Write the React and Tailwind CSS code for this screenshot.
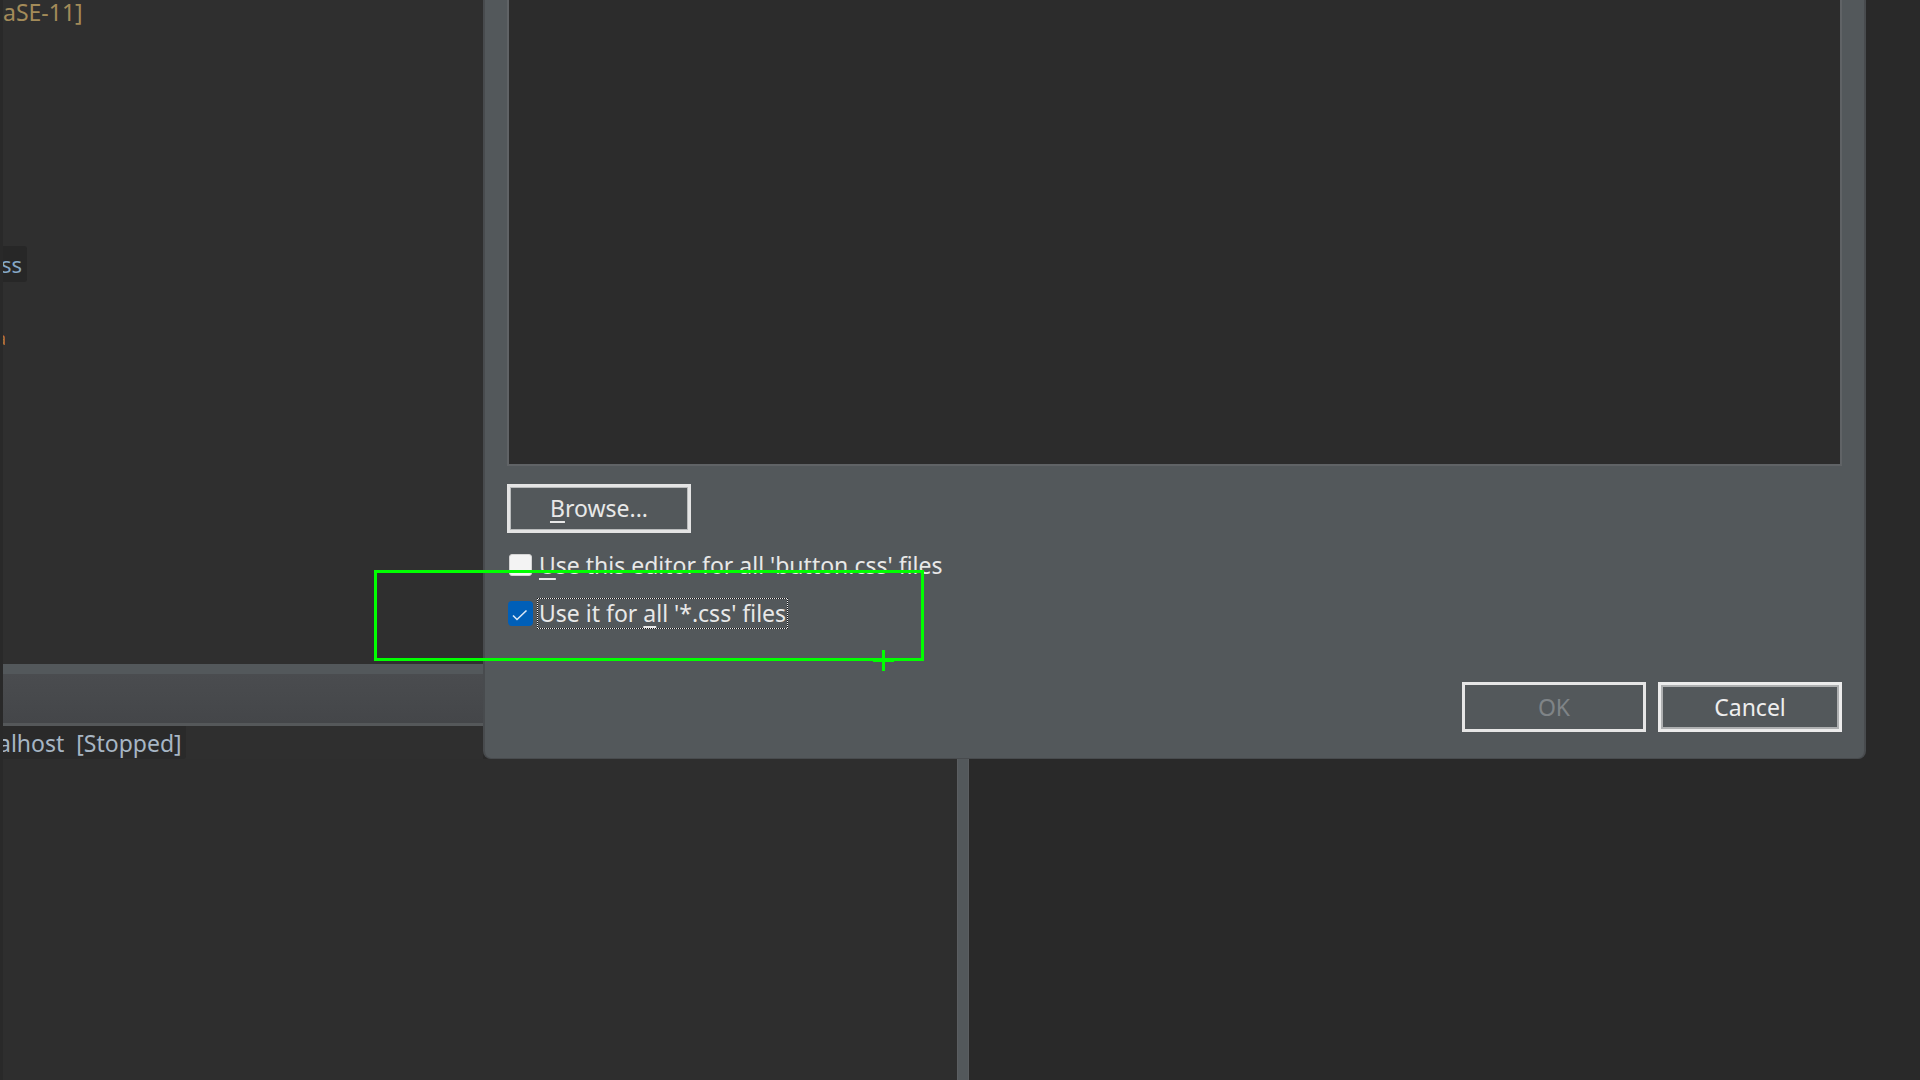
import React from 'react';

function EditorPane() {
  return (
    <div className="w-[483px] shrink-0 h-full flex flex-col bg-[#2f2f2f] border-l-[3px] border-[#292929]">
      <div className="h-[24px] text-[23px] leading-[24px] text-[#a38b59] whitespace-pre">aSE-11]</div>
      <div className="mt-[222px] w-[24px] h-[36px] bg-[#272727] rounded-r-[3px] overflow-hidden flex items-center">
        <span className="text-[22px] leading-[24px] text-[#86a8c6] -ml-[2px]">ss</span>
      </div>
      <div className="mt-[48px] w-[2px] h-[16px] overflow-hidden">
        <span className="block text-[18px] leading-[16px] text-[#b5763c] -ml-[7px]">a</span>
      </div>
      <div className="mt-auto h-[62px] flex flex-col">
        <div className="h-[10px] bg-[#53585b]" />
        <div className="flex-1 bg-gradient-to-b from-[#4a4c4f] to-[#444649]" />
        <div className="h-[3px] bg-[#55585a]" />
      </div>
      <div className="h-[33px] w-[183px] bg-[#2a2a2a] rounded-br-[3px] overflow-hidden flex items-center">
        <span className="-ml-[5px] whitespace-pre text-[23px] leading-[26px] text-[#a7b6c4]">alhost  [Stopped]</span>
      </div>
    </div>
  );
}

function Check({ checked }) {
  if (checked) {
    return (
      <div className="w-[25px] h-[25px] shrink-0 rounded-[4px] bg-[#005fb8] flex items-center justify-center">
        <svg width="25" height="25" viewBox="0 0 25 25">
          <polyline points="5,14.5 9,18.5 18.5,9.5" fill="none" stroke="#dce8f5" strokeWidth="1.6" />
        </svg>
      </div>
    );
  }
  return <div className="w-[23px] h-[22px] shrink-0 rounded-[3px] bg-[#f3f3f3] border border-[#d4d4d4]" />;
}

function Dialog() {
  return (
    <div className="w-[1383px] shrink-0 h-full flex flex-col bg-[#53585b] border-x-2 border-b border-[#484b4e] rounded-b-[8px] px-[22px] pb-[26px] text-[23px] text-[#e8e8e8]">
      <div className="h-[466px] shrink-0 bg-[#2c2c2c] border-2 border-t-0 border-[#606366]" />
      <button className="mt-[18px] w-[184px] h-[49px] border-[3px] border-[#e4e4e4] shadow-[inset_0_0_0_1px_#b9bbbc] flex items-center justify-center text-[23px] text-[#e8e8e8]">
        <span><u className="underline-offset-4">B</u>rowse...</span>
      </button>
      <div className="mt-[17px] h-[30px] flex items-center gap-[7px] pl-[2px]">
        <Check />
        <span className="whitespace-pre leading-[30px]"><u className="underline-offset-4">U</u>se this editor for all 'button.css' files</span>
      </div>
      <div className="mt-[18px] h-[31px] flex items-center gap-[4px] pl-[1px]">
        <Check checked />
        <span className="h-[31px] flex items-center px-[1px] border border-[#f0f0f0] outline-1 outline-dotted outline-[#111] -outline-offset-1 whitespace-pre">
          Use it for <u className="underline-offset-4">a</u>ll '*.css' files
        </span>
      </div>
      <div className="mt-auto flex justify-end gap-[12px]">
        <div className="w-[184px] h-[50px] border-[3px] border-[#e6e6e6] flex items-center justify-center text-[23px] text-[#7f8487]">OK</div>
        <div className="w-[184px] h-[50px] border-[3px] border-[#ececec] shadow-[inset_0_0_0_2px_#aeb0b1] flex items-center justify-center text-[23px] text-[#eeeeee]">Cancel</div>
      </div>
    </div>
  );
}

export default function App() {
  return (
    <div className="relative w-[1920px] h-[1080px] overflow-hidden bg-[#292929] font-['Noto_Sans','Liberation_Sans',sans-serif] text-[23px]">
      <div className="flex h-[759px]">
        <EditorPane />
        <Dialog />
        <div className="flex-1 bg-[#292929]" />
      </div>
      <div className="flex h-[321px]">
        <div className="w-[957px] bg-[#2e2e2e] border-l-[3px] border-[#292929]" />
        <div className="w-[12px] bg-[#53585b] border-x border-[#5b5e61]" />
        <div className="flex-1 bg-[#292929]" />
      </div>
      {/* green annotation box */}
      <div className="absolute left-[374px] top-[570px] w-[550px] h-[91px] border-[3px] border-[#00ff00]" />
      <div className="absolute left-[882px] top-[650px] w-[3px] h-[21px] bg-[#00ff00]" />
      <div className="absolute left-[873px] top-[659px] w-[21px] h-[3px] bg-[#00ff00]" />
    </div>
  );
}
